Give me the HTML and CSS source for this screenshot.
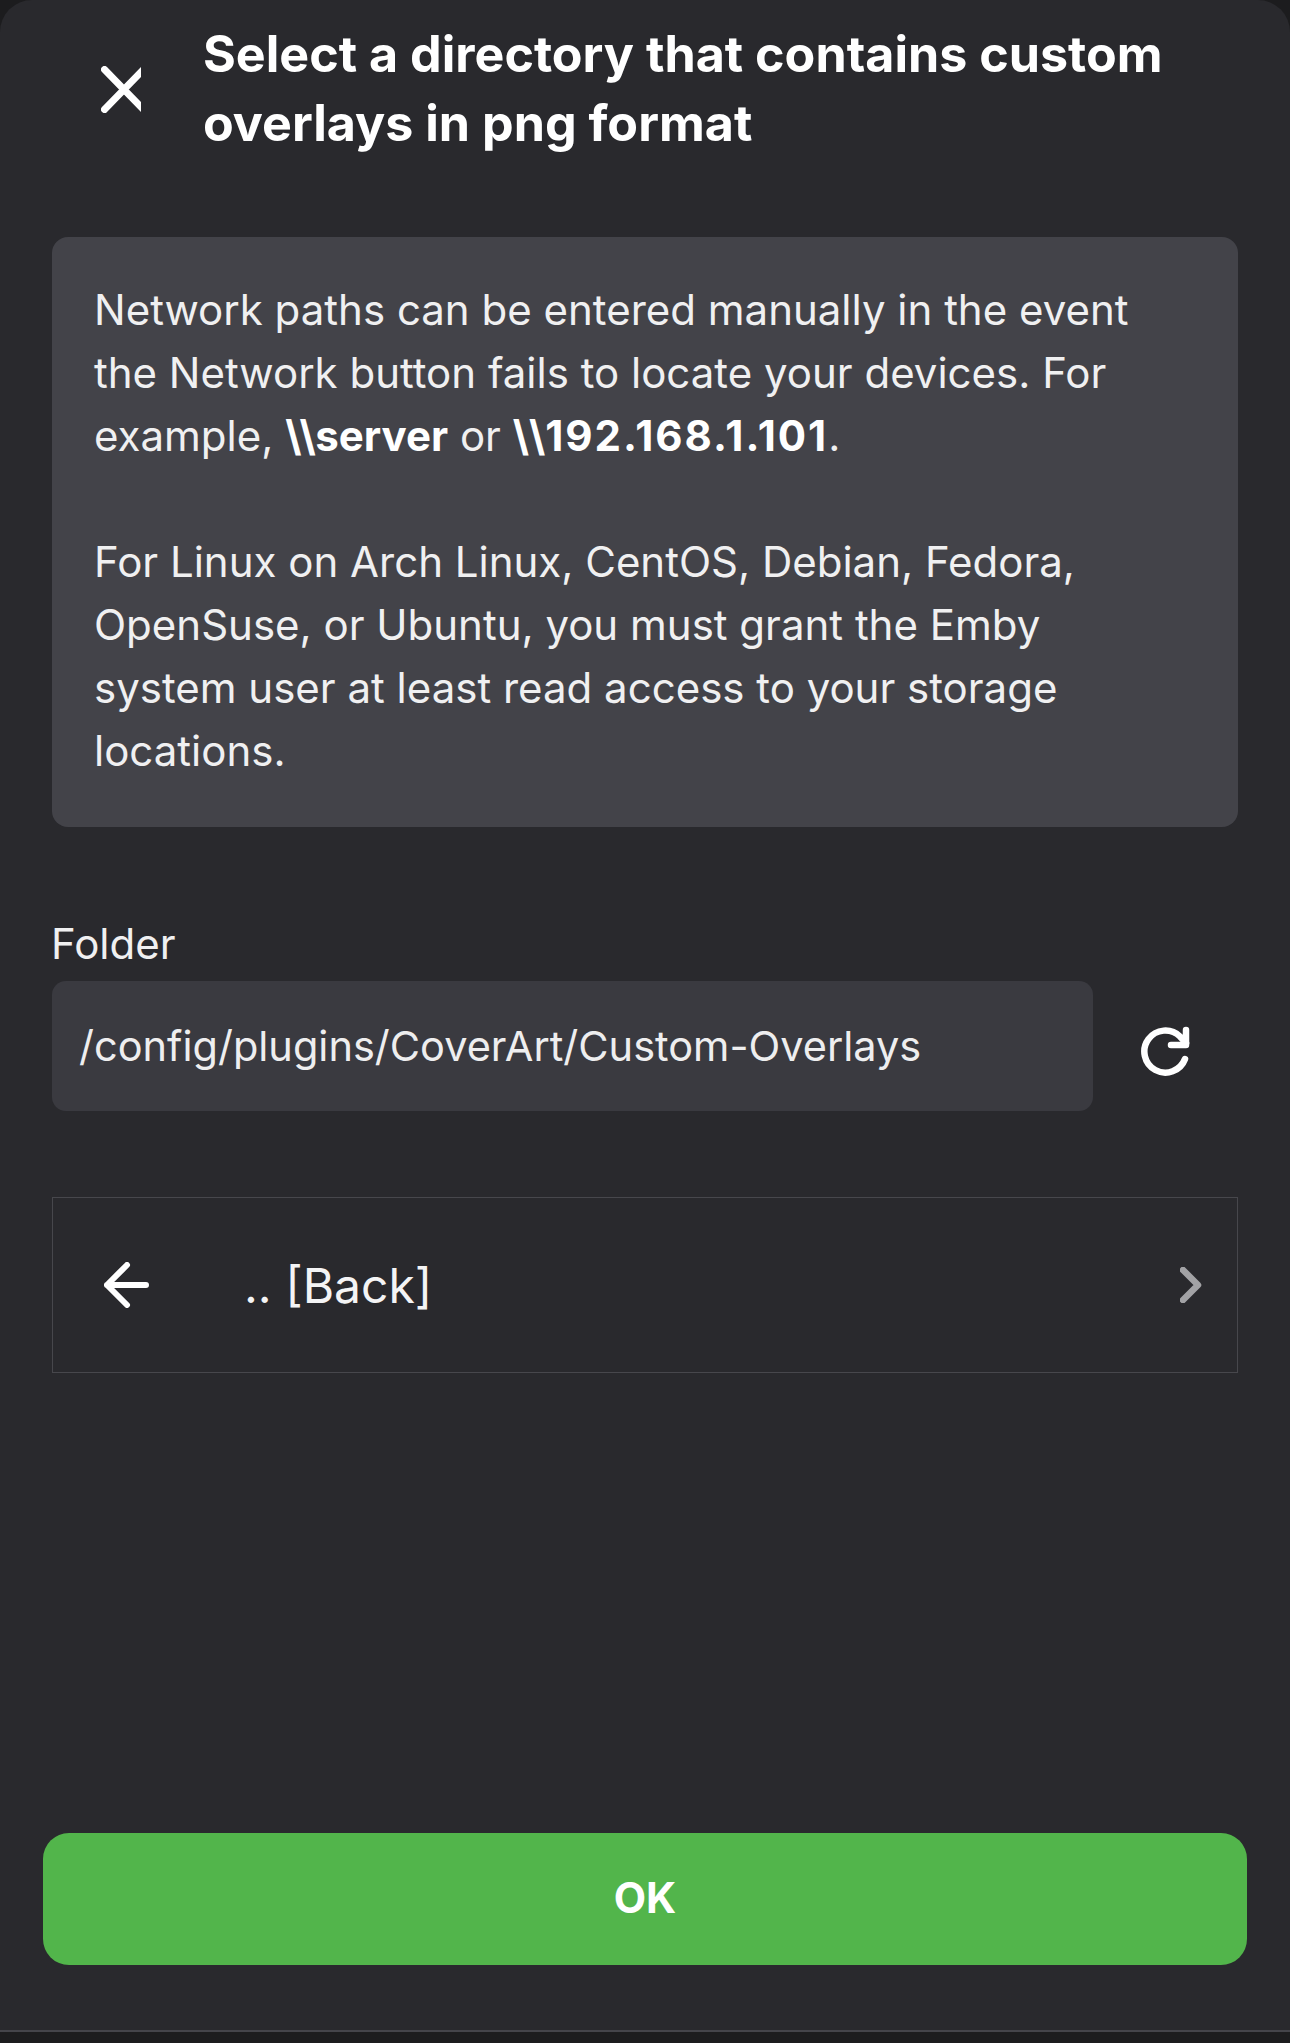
FILE: index.html
```html
<!DOCTYPE html>
<html>
<head>
  <link rel="stylesheet" href="styles.css">
</head>
<body>
  <div class="dialog">
    <div class="header">
      <button class="close-btn">
        <svg class="close-icon" viewBox="0 0 46 47" width="46" height="47"><path d="M3.500 3.500 42.500 43.500M42.500 3.500 3.500 43.500"/></svg>
      </button>
      <h1 class="title">Select a directory that contains custom overlays in png format</h1>
    </div>

    <div class="notice">
      <p>Network paths can be entered manually in the event the Network button fails to locate your devices. For example, <b>\\server</b> or <b class="ip">\\192.168.1.101</b>.</p>
      <p>For Linux on Arch Linux, CentOS, Debian, Fedora, OpenSuse, or Ubuntu, you must grant the Emby system user at least read access to your storage locations.</p>
    </div>

    <label class="field-label">Folder</label>
    <div class="field-row">
      <div class="field">/config/plugins/CoverArt/Custom-Overlays</div>
      <svg class="refresh-icon" viewBox="0 0 50 50" width="50" height="50">
        <path d="M45 33A21 21 0 1 1 40 10.500L46 17"/>
        <path d="M46 4V19H31"/>
      </svg>
    </div>

    <div class="list-item">
      <svg class="back-icon" viewBox="0 0 48 46" width="48" height="46"><path d="M42 23H3M23 3 3 23 23 43"/></svg>
      <span class="list-text">.. [Back]</span>
      <svg class="chevron-icon" viewBox="0 0 22 36" width="22" height="36"><path d="M3 3 18 18 3 33"/></svg>
    </div>

    <div class="footer">
      <button class="ok-btn">OK</button>
    </div>
  </div>
</body>
</html>
```

FILE: styles.css
```css
* {
  box-sizing: border-box;
}

html, body {
  height: 100%;
}

body {
  margin: 0;
  background-color: #1c1c1e;
  font-family: Inter, "Liberation Sans", sans-serif;
  color: #fff;
}

.dialog {
  height: 2032px;
  background-color: #29292d;
  border-radius: 32px 32px 0 0;
  border-bottom: 2px solid #44444a;
  padding: 0 52px;
  display: flex;
  flex-direction: column;
}

.header {
  display: flex;
  height: 237px;
  padding-top: 19px;
}

.close-btn {
  width: 40px;
  height: 47px;
  margin: 47px 62px 0 49px;
  padding: 0;
  background: none;
  border: none;
  overflow: hidden;
  flex-shrink: 0;
}

.close-icon {
  display: block;
  fill: none;
  stroke: #fff;
  stroke-width: 7;
  stroke-linecap: round;
}

.title {
  margin: 0;
  font-size: 50.2px;
  line-height: 69px;
  font-weight: 700;
  width: 1040px;
}

.notice {
  height: 590px;
  background-color: #434349;
  border-radius: 16px;
  padding: 41px 60px 0 42px;
  font-size: 42px;
  line-height: 63px;
  color: #f0f0f1;
}

.notice p {
  margin: 0 0 63px;
}

.notice b {
  color: #fff;
  font-weight: 700;
}

.notice .ip {
  letter-spacing: 2px;
}

.field-label {
  display: block;
  margin: 93px 0 0 -1px;
  font-size: 42px;
  line-height: 48px;
  color: #f0f0f1;
}

.field-row {
  display: flex;
  align-items: center;
  margin-top: 13px;
}

.field {
  width: 1041px;
  height: 130px;
  background-color: #3a3a40;
  border-radius: 14px;
  padding-left: 27px;
  font-size: 41.5px;
  line-height: 130px;
  color: #eeeeef;
}

.refresh-icon {
  margin: 10px 0 0 47px;
  fill: none;
  stroke: #fff;
  stroke-width: 6.500;
  stroke-linecap: round;
  stroke-linejoin: round;
}

.list-item {
  display: flex;
  align-items: center;
  margin-top: 86px;
  height: 176px;
  border: 1px solid #47474c;
  padding: 0 35px 0 51px;
}

.back-icon {
  flex-shrink: 0;
  fill: none;
  stroke: #fff;
  stroke-width: 6;
  stroke-linecap: round;
  stroke-linejoin: round;
}

.list-text {
  flex: 1;
  margin-left: 92px;
  font-size: 48px;
  color: #f4f4f5;
}

.chevron-icon {
  fill: none;
  stroke: #a2a2a5;
  stroke-width: 6.500;
  stroke-linecap: round;
  stroke-linejoin: round;
}

.footer {
  margin-top: auto;
  padding-bottom: 65px;
}

.ok-btn {
  display: block;
  width: 1204px;
  height: 132px;
  margin-left: -9px;
  padding-bottom: 5px;
  background-color: #52b54b;
  border: none;
  border-radius: 26px;
  font-family: Inter, "Liberation Sans", sans-serif;
  font-size: 42px;
  font-weight: 700;
  color: #fff;
}
```
